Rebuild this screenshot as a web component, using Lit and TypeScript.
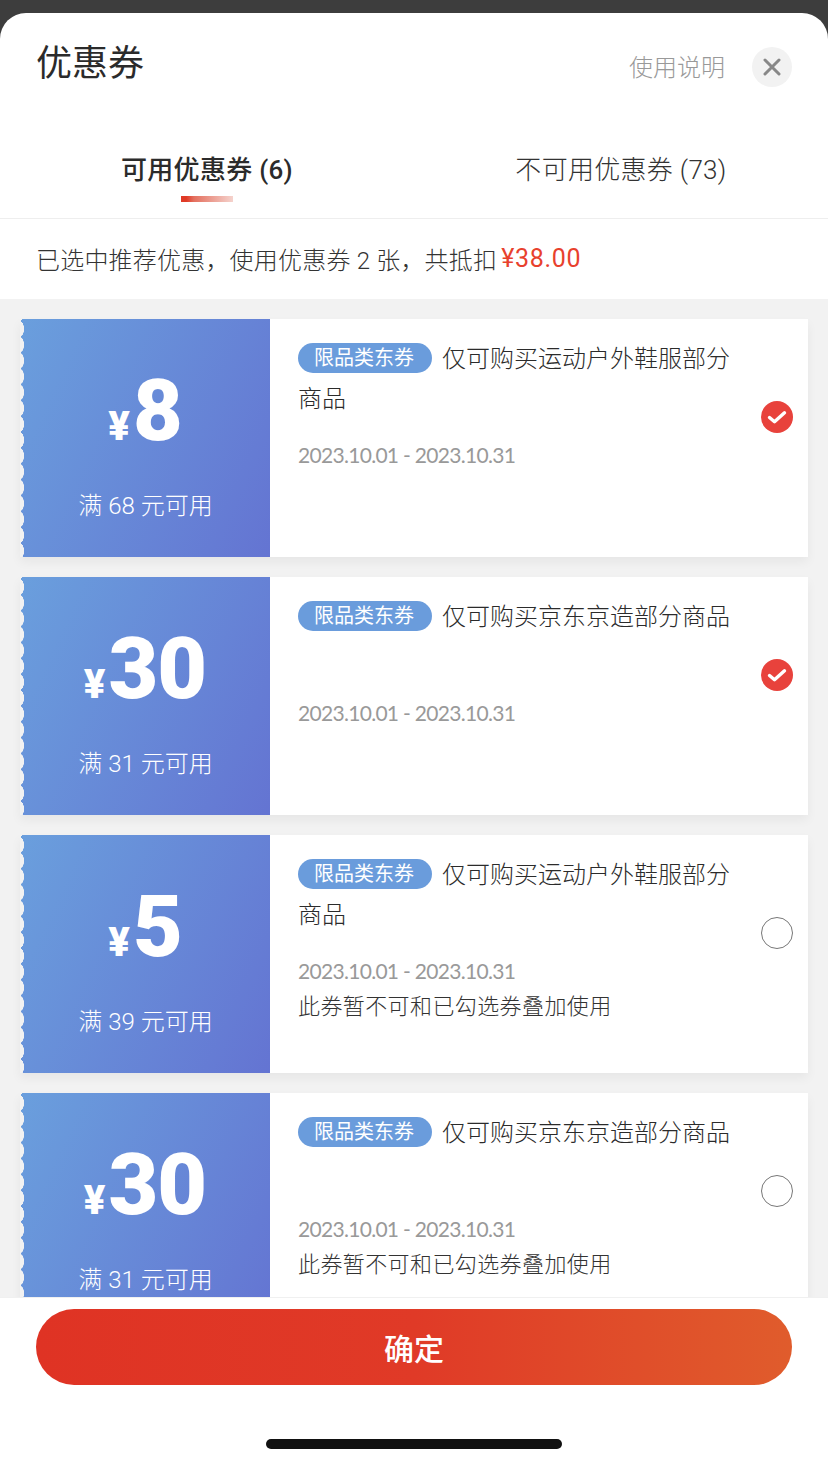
import { html, css, LitElement } from 'lit';
import { customElement } from 'lit/decorators.js';

interface Coupon {
  amount: string;
  limit: string;
  title: string;
  checked: boolean;
  note?: string;
}

const coupons: Coupon[] = [
  { amount: '8', limit: '满 68 元可用', title: '仅可购买运动户外鞋服部分商品', checked: true },
  { amount: '30', limit: '满 31 元可用', title: '仅可购买京东京造部分商品', checked: true },
  { amount: '5', limit: '满 39 元可用', title: '仅可购买运动户外鞋服部分商品', checked: false, note: '此券暂不可和已勾选券叠加使用' },
  { amount: '30', limit: '满 31 元可用', title: '仅可购买京东京造部分商品', checked: false, note: '此券暂不可和已勾选券叠加使用' },
];

@customElement('app-root')
export class AppRoot extends LitElement {
  static styles = css`
    :host {
      display: flex;
      flex-direction: column;
      height: 1465px;
      overflow: hidden;
      background: #3d3d3d;
      font-family: Roboto, 'Noto Sans CJK SC', sans-serif;
      color: #2b2b2b;
      padding-top: 13px;
      box-sizing: border-box;
    }
    .sheet {
      flex: 1;
      min-height: 0;
      display: flex;
      flex-direction: column;
      background: #fff;
      border-radius: 26px 26px 0 0;
      overflow: hidden;
    }
    .head {
      height: 109px;
      display: flex;
      justify-content: space-between;
      padding: 26px 36px 0 36px;
      box-sizing: border-box;
    }
    .head h1 {
      margin: 0;
      font-size: 36px;
      line-height: 50px;
      font-weight: 400;
    }
    .head-right {
      display: flex;
      align-items: flex-start;
      gap: 27px;
      margin-top: -2px;
      padding-top: 10px;
    }
    .help {
      font-size: 24px;
      line-height: 42px;
      color: #999;
      font-weight: 300;
    }
    .close {
      width: 40px;
      height: 40px;
      border-radius: 50%;
      background: #f2f2f2;
      display: flex;
      align-items: center;
      justify-content: center;
    }
    .tabs {
      height: 97px;
      display: grid;
      grid-template-columns: 1fr 1fr;
      border-bottom: 1px solid #eee;
      box-sizing: border-box;
    }
    .tab {
      display: flex;
      flex-direction: column;
      align-items: center;
      padding-top: 29px;
      font-size: 26px;
      line-height: 38px;
      letter-spacing: 0.3px;
      font-weight: 300;
      color: #333;
    }
    .tab.active {
      font-weight: 500;
      color: #2b2b2b;
    }
    .bar {
      width: 52px;
      height: 6px;
      margin-top: 7px;
      background: linear-gradient(90deg, #e03a26 0 10%, #e4705f 25%, #f5d3cd 100%);
    }
    .info {
      height: 80px;
      flex: none;
      display: flex;
      align-items: center;
      padding: 0 0 2px 36px;
      box-sizing: border-box;
      font-size: 24px;
      letter-spacing: 0.2px;
      font-weight: 300;
      color: #333;
    }
    .info b {
      font-size: 25px;
      letter-spacing: 0.7px;
      font-weight: 400;
      color: #e8412d;
      margin-left: 4px;
      padding-top: 1px;
    }
    .list {
      flex: 1;
      min-height: 0;
      overflow: hidden;
      background: #f2f2f2;
      padding: 20px 20px 0;
      display: flex;
      flex-direction: column;
      gap: 20px;
    }
    .coupon {
      flex: none;
      height: 238px;
      display: flex;
      background: #fff;
      box-shadow: 0 5px 10px rgba(0, 0, 0, 0.05);
    }
    .left {
      position: relative;
      flex: none;
      width: 250px;
      display: flex;
      flex-direction: column;
      align-items: center;
      color: #fff;
      background: linear-gradient(115deg, #6a9fdd 0%, #6474d2 100%);
    }
    .left::before {
      content: '';
      position: absolute;
      left: 0;
      top: 0;
      bottom: 0;
      width: 6px;
      background: radial-gradient(ellipse 4px 8px at 0 50%, #f2f2f2 96%, transparent 100%) 0 2px / 6px 15.87px repeat-y;
    }
    .price {
      display: flex;
      align-items: baseline;
      height: 132px;
      margin-top: 26px;
      line-height: 132px;
      font-family: Roboto, sans-serif;
      font-weight: 900;
    }
    .price i {
      font-style: normal;
      font-size: 40px;
      margin-right: 3px;
    }
    .price span {
      font-size: 86px;
      letter-spacing: -1px;
    }
    .limit {
      margin-top: 11px;
      padding-left: 1px;
      font-size: 24px;
      line-height: 36px;
      font-weight: 300;
    }
    .body {
      flex: 1;
      min-width: 0;
      padding: 20px 0 0 28px;
    }
    .title {
      min-height: 80px;
      font-size: 24px;
      line-height: 40px;
      font-weight: 300;
      color: #2b2b2b;
    }
    .tag {
      display: inline-block;
      height: 30px;
      line-height: 30px;
      padding: 0 18px 0 16px;
      margin-right: 10px;
      border-radius: 15px;
      background: #6a9cdc;
      color: #fff;
      font-size: 20px;
      font-weight: 400;
      vertical-align: 2px;
    }
    .date {
      margin-top: 18px;
      font-family: Lato, sans-serif;
      font-size: 21px;
      letter-spacing: -0.7px;
      line-height: 36px;
      color: #999;
      font-weight: 400;
    }
    .note {
      font-size: 22px;
      letter-spacing: 0.4px;
      line-height: 36px;
      font-weight: 300;
      color: #333;
    }
    .check {
      flex: none;
      width: 32px;
      height: 32px;
      margin: 82px 15px 0 12px;
    }
    .foot {
      flex: none;
      height: 168px;
      background: #fff;
      border-top: 1px solid #f0f0f0;
      box-sizing: border-box;
      padding: 11px 36px 0;
      display: flex;
      flex-direction: column;
      align-items: center;
    }
    .ok {
      width: 100%;
      height: 76px;
      flex: none;
      border-radius: 38px;
      background: linear-gradient(90deg, #df3324 0%, #e03a27 50%, #e05c2c 100%);
      color: #fff;
      font-size: 30px;
      font-weight: 500;
      display: flex;
      align-items: center;
      justify-content: center;
    }
    .home {
      width: 296px;
      height: 10px;
      margin-top: 54px;
      border-radius: 5px;
      background: #111;
    }
  `;

  renderCheck(checked: boolean) {
    if (!checked) {
      return html`<svg class="check" viewBox="0 0 32 32">
        <circle cx="16" cy="16" r="15.5" fill="#fff" stroke="#777" stroke-width="1" />
      </svg>`;
    }
    return html`<svg class="check" viewBox="0 0 32 32">
      <circle cx="16" cy="16" r="16" fill="#e8423c" />
      <path d="M8.5 16.5l5 4.2L23.5 11.8" fill="none" stroke="#fff" stroke-width="3.4" stroke-linecap="round" stroke-linejoin="round" />
    </svg>`;
  }

  render() {
    return html`
      <div class="sheet">
        <div class="head">
          <h1>优惠券</h1>
          <div class="head-right">
            <span class="help">使用说明</span>
            <div class="close">
              <svg width="18" height="18" viewBox="0 0 18 18">
                <path d="M2 2l14 14M16 2L2 16" stroke="#888" stroke-width="3" stroke-linecap="round" />
              </svg>
            </div>
          </div>
        </div>
        <div class="tabs">
          <div class="tab active">可用优惠券 (6)<div class="bar"></div></div>
          <div class="tab">不可用优惠券 (73)</div>
        </div>
        <div class="info">已选中推荐优惠，使用优惠券 2 张，共抵扣<b>¥38.00</b></div>
        <div class="list">
          ${coupons.map(
            (c) => html`
              <div class="coupon">
                <div class="left">
                  <div class="price"><i>¥</i><span>${c.amount}</span></div>
                  <div class="limit">${c.limit}</div>
                </div>
                <div class="body">
                  <div class="title"><span class="tag">限品类东券</span>${c.title}</div>
                  <div class="date">2023.10.01 - 2023.10.31</div>
                  ${c.note ? html`<div class="note">${c.note}</div>` : ''}
                </div>
                ${this.renderCheck(c.checked)}
              </div>
            `
          )}
        </div>
        <div class="foot">
          <div class="ok">确定</div>
          <div class="home"></div>
        </div>
      </div>
    `;
  }
}
